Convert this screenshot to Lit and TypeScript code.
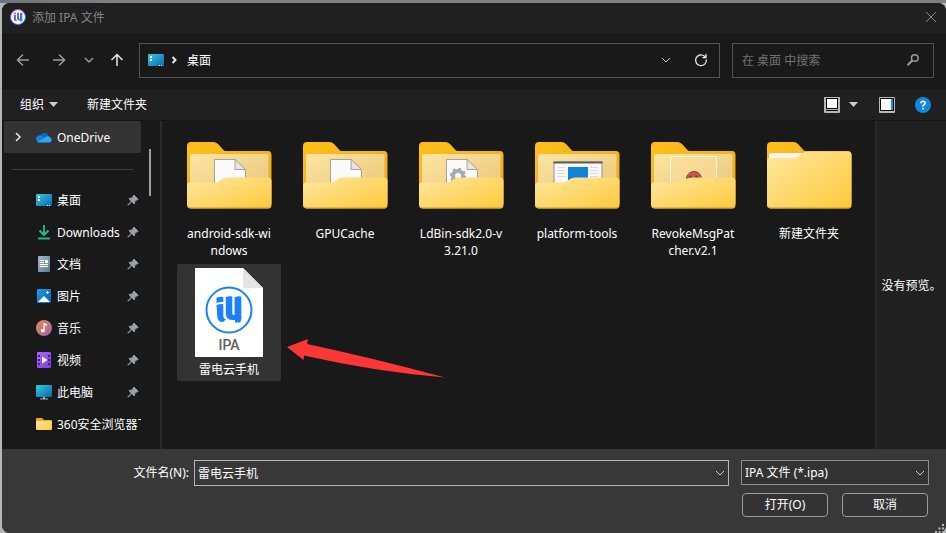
import { LitElement, html, svg, css, nothing } from "lit";
import { customElement, state } from "lit/decorators.js";
import { classMap } from "lit/directives/class-map.js";

type Kind = "doc" | "gear" | "app" | "image" | "empty" | "ipa";

interface Place {
  name: string;
  icon: unknown;
  pinned: boolean;
}

interface Entry {
  name: string;
  kind: Kind;
}

const desktopIcon = html`<svg class="ic" viewBox="0 0 16 16">
  <rect y="2" width="16" height="12" rx="1" fill="url(#g-desktop)" />
  <path d="M2 4h2v2H2zM2 7h2v2H2z" fill="#fff" />
  <path d="M11 13.500h1M13 13.500h1" stroke="#fff" />
</svg>`;

const cloudIcon = html`<svg class="ic" viewBox="0 0 16 16">
  <path d="M3.500 8A4.800 4.800 0 0 1 12.400 6.500L9 11z" fill="#0a6bc4" />
  <path d="M0 10.300A3.700 3.700 0 0 1 5.800 6.900L11 10 2.500 13.400A3.200 3.200 0 0 1 0 10.300z" fill="#1283d6" />
  <path d="M11.500 7A3.600 3.600 0 0 1 14.400 8.600 2.700 2.700 0 0 1 13.400 13.500H3.200Q2.400 13.500 1.800 13L8.800 8.500z" fill="#2aa8f0" />
</svg>`;

const downloadIcon = html`<svg class="ic" viewBox="0 0 16 16" fill="none" stroke="#27bf8c" stroke-width="1.8">
  <path d="M8 1v9.500M3.500 6.500 8 11l4.500-4.500" />
  <rect x="2" y="13.500" width="12" height="2" fill="#22b286" stroke="none" />
</svg>`;

const documentIcon = html`<svg class="ic" viewBox="0 0 16 16">
  <rect x="2" width="12" height="16" rx="1" fill="url(#g-docs)" />
  <path d="M4 4.500h4M4 6.500h4M4 8.500h8M4 10.500h8" stroke="#fff" />
  <rect x="9" y="4" width="3" height="3" fill="#fff" />
</svg>`;

const pictureIcon = html`<svg class="ic" viewBox="0 0 16 16">
  <rect x="1" y="1" width="14" height="14" rx="1" fill="url(#g-pics)" />
  <path d="M2 14 7.200 8.700Q8 8 8.800 8.700L14 14z" fill="#fff" />
  <path d="M11.500 3v3M10 4.500h3" stroke="#fff" />
</svg>`;

const musicIcon = html`<svg class="ic" viewBox="0 0 16 16">
  <circle cx="8" cy="8" r="8" fill="url(#g-music)" />
  <ellipse cx="6.700" cy="10.700" rx="2" ry="1.700" fill="#fff" />
  <path d="M7.500 3h1.200L11 4.500V6L8.700 5v6H7.500z" fill="#fff" />
</svg>`;

const videoIcon = html`<svg class="ic" viewBox="0 0 16 16">
  <rect x="1" width="14" height="16" rx="1" fill="url(#g-video)" />
  <path d="M3 3v12M13 3v12" stroke="#451a8c" stroke-width="2" stroke-dasharray="2 2" />
  <path d="M6 4.500 11.500 8 6 11.500z" fill="#fff" />
</svg>`;

const computerIcon = html`<svg class="ic" viewBox="0 0 16 16">
  <rect y="1" width="16" height="12" rx="1" fill="url(#g-pc)" />
  <path d="M7 13h2v2H7zM4 14.500h8v1H4z" fill="#a9b4bb" />
</svg>`;

const smallFolderIcon = html`<svg class="ic" viewBox="0 0 16 16">
  <path d="M0 3q0-1 1-1h5l2 2h7q1 0 1 1v8H0z" fill="#f0a91c" />
  <path d="M0 6q0-1 1-1h14q1 0 1 1v7q0 1-1 1H1q-1 0-1-1z" fill="url(#g-front)" />
</svg>`;

const pinIcon = html`<svg class="pin" viewBox="0 0 12 12" fill="#97a0a6">
  <path d="M7 1 11.200 5.200 10.200 6.200 9.500 5.900 7.800 7.600Q8.200 9 7.200 10L4.700 7.600 1.200 11.200.8 10.800 4.300 7.200 2 4.800Q3 3.800 4.400 4.200L6.200 2.500 6 2z" stroke="#97a0a6" stroke-width=".8" />
</svg>`;

const chevronDown = html`<svg class="chev" viewBox="0 0 10 10"><path d="M1 3l4 4 4-4" /></svg>`;
const triangle = html`<svg class="tri" viewBox="0 0 10 6"><path d="M0 0h9L4.500 5z" fill="#cfcfcf" /></svg>`;

const logoMark = svg`
  <path d="M21.500 30.700Q25 29.300 28.300 30V35Q25 34.700 21.500 36z" />
  <path d="M21.500 38.200Q25 36.600 28.300 37.200V49.500Q28.300 51.500 31 52.300L28.200 55Q22.500 55 22.300 49.500z" />
  <path d="M30.800 30.300Q33.500 29 37.300 29.500V46.500Q37.300 48.300 39.600 48.300V30.300Q42.500 29 46.300 29.500V48.500Q46.800 51 46 53L45.300 55.500H40V53H37Q30.800 53 30.800 46.500z" />
`;

const appLogo = html`<svg class="ic" viewBox="0 0 16 16">
  <circle cx="8" cy="8" r="7.500" fill="#fff" stroke="url(#g-logo)" />
  <path d="M3.800 3.700H6V5H3.800zM3.800 5.700H6V10q0 1 1 1.200L6 12.200Q3.900 12.200 3.900 10zM7 3.700H9V9q0 1 1 1V3.700h2.300V11.500l-.5.900H10.200V11.600H9Q7 11.500 7 9.300z" fill="url(#g-logo)" />
</svg>`;

const sheet = svg`
  <path d="M27.500 17.500H48L58.500 28V50H27.500z" fill="#fafafa" stroke="#a9a49a" />
  <path d="M48 17.500V27.500H58.500z" fill="#e6e6e6" stroke="#a9a49a" />
`;

const contents: Record<string, unknown> = {
  doc: sheet,
  gear: svg`${sheet}
    <circle cx="39" cy="34" r="5" fill="none" stroke="#a3acb5" stroke-width="4" />
    <circle cx="39" cy="34" r="7" fill="none" stroke="#a3acb5" stroke-width="2.500" stroke-dasharray="2.750 2.750" />`,
  app: svg`
    <rect x="19" y="20" width="48" height="28" fill="#f8f8f8" stroke="#8f8f8f" />
    <rect x="18.500" y="19.500" width="49" height="2" fill="#5f5f5f" />
    <path d="M22 25.500h8M22 28.500h8M22 31.500h8M22 34.500h8M55 25.500h8M55 28.500h8M55 31.500h8M55 34.500h8" stroke="#dcdcdc" />
    <rect x="33" y="25" width="20" height="20" fill="#1183d8" />`,
  image: svg`
    <path d="M19.500 48V14.500H65.500V48" fill="#fbe0a0" fill-opacity=".4" stroke="#fff6dc" />
    <circle cx="43" cy="37" r="7.500" fill="#d9534a" stroke="#77443a" />
    <path d="M37 36l3-3 1 3zM45 33l3 3h-4z" fill="#444" />`,
};

function folderPicture(kind: Kind) {
  const back = svg`<path d="M0 4Q0 0 4 0H26Q29 0 31 2L36 7.500Q37 9 39 9H81Q84.500 9 84.500 13V62H0z" fill="url(#g-back)" />`;
  if (kind === "empty") {
    return html`<svg class="folder" viewBox="0 0 85 67">
      ${back}
      <path d="M2 13Q2 11 4 11H40L34 17H2z" fill="#f2f4f6" />
      <path d="M0 19Q0 16 3 16H27Q30 16 32 14L36 11Q38 9.500 41 9.500H81Q84.500 9.500 84.500 13V63Q84.500 66.500 81 66.500H4Q0 66.500 0 63z" fill="url(#g-front)" />
      <path d="M1 64.500Q2 66 4 66H81Q83 66 84 64.500" fill="none" stroke="#c99b27" />
    </svg>`;
  }
  return html`<svg class="folder" viewBox="0 0 85 67">
    ${back}
    <path d="M3 13.500Q3 12 4.500 12H80Q81.500 12 81.500 13.500V50H3z" fill="url(#g-inner)" />
    ${contents[kind]}
    <path d="M0 43Q0 40.500 3 40.500H27Q30 40.500 32 39L35 37Q37 35.500 40 35.500H81Q84.500 35.500 84.500 39V63Q84.500 66.500 81 66.500H4Q0 66.500 0 63z" fill="url(#g-front)" />
    <path d="M1 64.500Q2 66 4 66H81Q83 66 84 64.500" fill="none" stroke="#c99b27" />
  </svg>`;
}

const ipaPicture = html`<svg class="ipa" viewBox="0 0 68 90">
  <path d="M0 1H48L68 21V90H0z" fill="#fff" />
  <path d="M48 1V21H68z" fill="#e4e4e4" />
  <circle cx="34" cy="43" r="22.500" fill="none" stroke="#1a80fb" stroke-width="2" />
  <g fill="#1a80fb">${logoMark}</g>
  <text x="34" y="83" text-anchor="middle" class="ext">IPA</text>
</svg>`;

@customElement("app-root")
export class AppRoot extends LitElement {
  @state() private selected = "雷电云手机";

  private places: Place[] = [
    { name: "桌面", icon: desktopIcon, pinned: true },
    { name: "Downloads", icon: downloadIcon, pinned: true },
    { name: "文档", icon: documentIcon, pinned: true },
    { name: "图片", icon: pictureIcon, pinned: true },
    { name: "音乐", icon: musicIcon, pinned: true },
    { name: "视频", icon: videoIcon, pinned: true },
    { name: "此电脑", icon: computerIcon, pinned: true },
    { name: "360安全浏览器下载", icon: smallFolderIcon, pinned: false },
  ];

  private entries: Entry[] = [
    { name: "android-sdk-wi\nndows", kind: "doc" },
    { name: "GPUCache", kind: "doc" },
    { name: "LdBin-sdk2.0-v\n3.21.0", kind: "gear" },
    { name: "platform-tools", kind: "app" },
    { name: "RevokeMsgPat\ncher.v2.1", kind: "image" },
    { name: "新建文件夹", kind: "empty" },
    { name: "雷电云手机", kind: "ipa" },
  ];

  static styles = css`
    :host {
      display: block;
      box-sizing: border-box;
      min-height: 100vh;
      padding: 3px 0 0 2px;
      background: linear-gradient(90deg, #6c777d, #808080 120px) top / 100% 3px no-repeat, #b4b7b7;
      color: #fff;
      font: 12px/17px "Noto Sans", "Noto Sans CJK SC", sans-serif;
      display: flex;
    }
    * {
      box-sizing: border-box;
    }
    button,
    input,
    select {
      font: inherit;
      color: inherit;
      background: none;
      border: 0;
      margin: 0;
      padding: 0;
      outline: 0;
    }
    svg {
      display: block;
      flex: none;
    }
    .defs {
      position: absolute;
    }
    .ic {
      width: 16px;
      height: 16px;
    }
    .window {
      flex: 1;
      min-width: 0;
      display: flex;
      flex-direction: column;
      border-radius: 8px;
      overflow: hidden;
      background: #191919;
    }
    .title {
      display: flex;
      align-items: center;
      gap: 6px;
      height: 30px;
      padding: 0 8px 2px;
      background: #202020;
      color: #858585;
    }
    .title h1 {
      flex: 1;
      margin: 0;
      font: inherit;
    }
    .close svg {
      width: 14px;
      height: 14px;
      stroke: #8a8a8a;
      fill: none;
    }
    .nav {
      display: flex;
      align-items: center;
      height: 56px;
      padding: 0 12px 2px 3px;
    }
    .nav > button,
    .address button,
    .search button {
      display: grid;
      place-items: center;
      height: 33px;
      width: 36px;
    }
    .nav > .recent {
      width: 24px;
    }
    .nav > .up {
      width: 32px;
    }
    .line {
      width: 14px;
      height: 14px;
      fill: none;
      stroke: #9a9a9a;
      stroke-width: 1.5;
    }
    .bright {
      stroke: #e8e8e8;
    }
    .chev {
      width: 10px;
      height: 10px;
      fill: none;
      stroke: #d0d0d0;
    }
    .recent .chev {
      stroke: #9a9a9a;
      stroke-width: 1.5;
    }
    .address,
    .search {
      display: flex;
      align-items: center;
      height: 35px;
      border: 1px solid #535353;
    }
    .address {
      flex: 1;
      margin-left: 6px;
      padding-left: 8px;
    }
    .crumb {
      flex: 1;
      display: flex;
      align-items: center;
      gap: 5px;
    }
    .crumb .line {
      width: 10px;
      height: 10px;
      stroke-width: 2;
    }
    .crumb a {
      color: inherit;
      text-decoration: none;
      padding-left: 3px;
    }
    .address .drop {
      width: 34px;
    }
    .search {
      width: 202px;
      margin-left: 12px;
      padding-left: 9px;
    }
    .search input {
      flex: 1;
      min-width: 0;
    }
    .search input::placeholder {
      color: #717171;
      opacity: 1;
    }
    .search button {
      width: 40px;
    }
    .tools {
      display: flex;
      align-items: center;
      height: 32px;
      padding: 0 15px 0 18px;
      background: #202020;
      border-bottom: 1px solid #161616;
    }
    .tools button {
      display: flex;
      align-items: center;
      gap: 5px;
    }
    .tri {
      width: 10px;
      height: 6px;
    }
    .tools .new {
      flex: 1;
      margin-left: 28px;
    }
    .tools .view {
      gap: 9px;
    }
    .tools .pane,
    .tools .help {
      margin-left: 20px;
    }
    .main {
      flex: 1;
      display: flex;
      min-height: 0;
    }
    .side {
      position: relative;
      width: 158px;
      padding: 0 19px 8px 2px;
    }
    .side hr {
      height: 1px;
      margin: 16px 8px 14px;
      border: 0;
      background: #3d3d3d;
    }
    .place {
      display: flex;
      align-items: center;
      height: 32px;
      width: 100%;
      text-align: left;
    }
    .place.current {
      background: #333;
      border-radius: 2px;
    }
    .place .twist {
      width: 28px;
      margin-right: 4px;
      display: grid;
      place-items: center;
    }
    .place .name {
      flex: 1;
      min-width: 0;
      margin-left: 5px;
      overflow: hidden;
      white-space: nowrap;
    }
    .pin {
      width: 12px;
      height: 12px;
      margin-right: 2px;
    }
    .thumb {
      position: absolute;
      right: 9px;
      top: 28px;
      width: 2px;
      height: 47px;
      background: #9f9f9f;
    }
    .files {
      flex: 1;
      display: grid;
      grid-template-columns: repeat(auto-fill, 104px);
      gap: 2px 12px;
      align-content: start;
      padding: 7px 0 7px 15px;
      border-left: 2px solid #2b2b2b;
    }
    .file {
      position: relative;
      display: flex;
      flex-direction: column;
      align-items: center;
      padding: 3px 4px;
      align-self: start;
      border-radius: 2px;
    }
    .file.on {
      background: #333;
    }
    .picture {
      display: flex;
      align-items: flex-start;
      height: 94px;
    }
    .folder {
      width: 85px;
      height: 67px;
      margin-top: 11px;
    }
    .ipa {
      width: 68px;
      height: 90px;
    }
    .ext {
      font: 500 14px Roboto, "Liberation Sans", sans-serif;
      fill: #606060;
    }
    .label {
      white-space: pre-line;
      text-align: center;
    }
    .pointer {
      position: absolute;
      left: 110px;
      top: 74px;
      width: 160px;
      height: 44px;
      pointer-events: none;
    }
    .preview {
      display: grid;
      place-items: center;
      width: 71px;
      background: #202020;
      border-left: 2px solid #292929;
      white-space: nowrap;
    }
    .foot {
      position: relative;
      display: grid;
      grid-template-columns: 187px 1fr 188px;
      gap: 6px 0;
      height: 84px;
      padding: 11px 17px 16px 0;
      background: #383838;
      align-items: start;
    }
    .foot label {
      text-align: right;
      line-height: 26px;
    }
    .combo {
      position: relative;
      display: flex;
      align-items: center;
      height: 26px;
      border: 1px solid #b5b5b5;
      margin: 0 12px 0 5px;
    }
    .combo input {
      flex: 1;
      min-width: 0;
      padding-left: 3px;
      height: 24px;
    }
    .combo button {
      display: grid;
      place-items: center;
      width: 17px;
      height: 24px;
    }
    .foot .type {
      margin: 0;
      height: 25px;
      background: #333;
      border-color: #8e8e8e;
    }
    .type select {
      appearance: none;
      flex: 1;
      height: 23px;
      padding-left: 3px;
    }
    .type .chev {
      position: absolute;
      right: 3px;
      pointer-events: none;
    }
    .actions {
      grid-column: 3;
      display: flex;
      gap: 14px;
      padding: 0 1px;
    }
    .actions button {
      flex: 1;
      height: 24px;
      line-height: 20px;
      border: 1px solid #9b9b9b;
      border-radius: 4px;
      background: #333;
    }
    .grip {
      position: absolute;
      right: 2px;
      bottom: 0;
      width: 9px;
      height: 9px;
      fill: #b8b8b8;
    }
  `;

  private renderDefs() {
    const grad = (id: string, from: string, to: string) => svg`
      <linearGradient id=${id} x1="0" y1="0" x2="1" y2="1">
        <stop offset="0" stop-color=${from} /><stop offset="1" stop-color=${to} />
      </linearGradient>`;
    return html`<svg class="defs" width="0" height="0" aria-hidden="true"><defs>
      ${grad("g-desktop", "#35c8dc", "#0a68b8")}
      ${grad("g-docs", "#a9bacb", "#5c7796")}
      ${grad("g-pics", "#1e9be8", "#0a63b8")}
      ${grad("g-music", "#f08a4b", "#9a5fb4")}
      ${grad("g-video", "#b065f0", "#7a3fe0")}
      ${grad("g-pc", "#2fd0dc", "#0a63b0")}
      ${grad("g-front", "#ffe8a0", "#ffc83a")}
      ${grad("g-back", "#ffbf1a", "#e9a821")}
      ${grad("g-inner", "#fde5a4", "#ebc576")}
      ${grad("g-logo", "#a04be8", "#1285f5")}
    </defs></svg>`;
  }

  private renderFile(e: Entry) {
    const on = e.name === this.selected;
    return html`<button class=${classMap({ file: true, on })} @click=${() => (this.selected = e.name)}>
      <span class="picture">${e.kind === "ipa" ? ipaPicture : folderPicture(e.kind)}</span>
      <span class="label">${e.name}</span>
      ${e.kind === "ipa"
        ? html`<svg class="pointer" viewBox="0 0 160 44" fill="#fd3737">
            <path d="M0 9 21 1 20 6Q86 20 158 39.500 90 34 17 17.500L16.500 22z" />
          </svg>`
        : nothing}
    </button>`;
  }

  render() {
    return html`
      ${this.renderDefs()}
      <div class="window">
        <header class="title">
          ${appLogo}
          <h1>添加 IPA 文件</h1>
          <button class="close" aria-label="关闭"><svg viewBox="0 0 14 14"><path d="M2 2l10 10M12 2 2 12" /></svg></button>
        </header>
        <nav class="nav">
          <button aria-label="返回"><svg class="line" viewBox="0 0 14 14"><path d="M13 7H1.500M7 1.500 1.500 7 7 12.500" /></svg></button>
          <button aria-label="前进"><svg class="line" viewBox="0 0 14 14"><path d="M1 7h11.500M7 1.500 12.500 7 7 12.500" /></svg></button>
          <button class="recent" aria-label="最近的位置">${chevronDown}</button>
          <button class="up" aria-label="上移"><svg class="line bright" viewBox="0 0 14 14"><path d="M7 13V1.500M1.500 7 7 1.500 12.500 7" /></svg></button>
          <div class="address">
            <div class="crumb">
              ${desktopIcon}
              <svg class="line bright" viewBox="0 0 10 10"><path d="M3.500 2l3 3-3 3" /></svg>
              <a href="#desktop">桌面</a>
            </div>
            <button class="drop" aria-label="以前的位置">${chevronDown}</button>
            <button class="reload" aria-label="刷新">
              <svg class="line bright" viewBox="0 0 14 14"><path d="M12.300 6.500A5.400 5.400 0 1 1 10.500 3.200L12 4.500M12 1v3.700H8.500" stroke-width="1.300" /></svg>
            </button>
          </div>
          <div class="search">
            <input type="search" aria-label="搜索" placeholder="在 桌面 中搜索" />
            <button aria-label="开始搜索">
              <svg class="line" viewBox="0 0 14 14"><circle cx="8.800" cy="5" r="3.300" /><path d="M6.300 7.500 1.500 12.300" stroke-width="2" /></svg>
            </button>
          </div>
        </nav>
        <div class="tools">
          <button>组织 ${triangle}</button>
          <button class="new">新建文件夹</button>
          <button class="view" aria-label="更改视图">
            <svg class="ic" viewBox="0 0 16 16">
              <rect width="16" height="16" rx="1" fill="#b8b8b8" />
              <rect x="2.500" y="1.500" width="11" height="10" fill="#fff" stroke="#000" />
              <path d="M2 13.500h12" stroke="#000" />
            </svg>
            ${triangle}
          </button>
          <button class="pane" aria-label="预览窗格">
            <svg class="ic" viewBox="0 0 16 16">
              <rect width="16" height="16" rx="1" fill="#b8b8b8" />
              <rect x="1.500" y="1.500" width="13" height="12" fill="#fff" stroke="#000" />
              <rect x="12" y="2" width="2" height="11" fill="#1090e0" />
            </svg>
          </button>
          <button class="help" aria-label="帮助">
            <svg class="ic" viewBox="0 0 16 16">
              <circle cx="8" cy="8" r="8" fill="#1288dc" />
              <path d="M5.900 6.300Q5.900 4.300 8 4.300T10.100 6.100Q10.100 7.200 9 7.800 8 8.400 8 9.600" fill="none" stroke="#fff" stroke-width="1.600" />
              <rect x="7.200" y="10.800" width="1.600" height="1.600" fill="#fff" />
            </svg>
          </button>
        </div>
        <div class="main">
          <aside class="side">
            <button class="place current">
              <span class="twist"><svg class="line bright" viewBox="0 0 14 14"><path d="M5 3l4 4-4 4" /></svg></span>
              ${cloudIcon}<span class="name">OneDrive</span>
            </button>
            <hr />
            ${this.places.map(
              (p) => html`<button class="place">
                <span class="twist"></span>${p.icon}<span class="name">${p.name}</span>${p.pinned ? pinIcon : nothing}
              </button>`
            )}
            <div class="thumb"></div>
          </aside>
          <main class="files">${this.entries.map((e) => this.renderFile(e))}</main>
          <aside class="preview">没有预览。</aside>
        </div>
        <footer class="foot">
          <label for="name">文件名(N):</label>
          <div class="combo">
            <input id="name" .value=${this.selected} />
            <button aria-label="历史记录">${chevronDown}</button>
          </div>
          <div class="combo type">
            <select aria-label="文件类型"><option>IPA 文件 (*.ipa)</option></select>
            ${chevronDown}
          </div>
          <div class="actions">
            <button>打开(O)</button>
            <button>取消</button>
          </div>
          <svg class="grip" viewBox="0 0 9 9"><path d="M7 0h2v2H7zM7 3.500h2v2H7zM7 7h2v2H7zM3.500 3.500h2v2h-2zM3.500 7h2v2h-2zM0 7h2v2H0z" /></svg>
        </footer>
      </div>
    `;
  }
}
